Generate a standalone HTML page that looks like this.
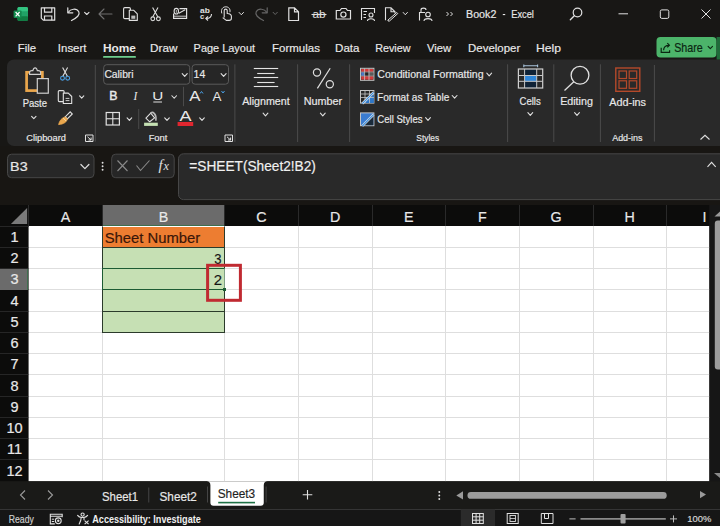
<!DOCTYPE html>
<html><head><meta charset="utf-8"><style>
html,body{margin:0;padding:0;background:#181715;overflow:hidden}
svg{display:block;font-family:"Liberation Sans",sans-serif}
text{paint-order:stroke}
</style></head><body>
<svg width="720" height="526" viewBox="0 0 720 526">
<rect x="0" y="0" width="720" height="526" rx="0" fill="#181715"/>
<rect x="7" y="59.5" width="730" height="86.5" rx="7" fill="#292929"/>
<rect x="17.5" y="7" width="10.5" height="13.8" rx="1.5" fill="#21a366"/>
<rect x="17.5" y="7" width="10.5" height="4.6" rx="1.5" fill="#33c481"/>
<rect x="17.5" y="11.6" width="10.5" height="4.6" rx="0" fill="#21a366"/>
<rect x="17.5" y="16.2" width="10.5" height="4.6" rx="1" fill="#107c41"/>
<rect x="13.6" y="10.4" width="8" height="7.6" rx="1" fill="#148a4e"/>
<path d="M15.6 12 L19.6 16.4 M19.6 12 L15.6 16.4" stroke="#ffffff" fill="none" stroke-width="1.2"/>
<path d="M41.3 7.8 H54.7 V20.2 H43.3 L41.3 18.2 Z" stroke="#e0e0e0" fill="none" stroke-width="1.2" stroke-linejoin="round"/>
<path d="M44.5 7.8 V12.2 H51.8 V7.8 M44.5 20.2 V16 H51.8 V20.2" stroke="#e0e0e0" fill="none" stroke-width="1.2"/>
<path d="M67.8 7.8 V12.8 H72.8" stroke="#e0e0e0" fill="none" stroke-width="1.2" stroke-linecap="round" stroke-linejoin="round"/>
<path d="M68.3 12.3 C70.5 8.8 76.5 7.8 78.8 11.8 C80.3 14.8 77 17.8 71.5 20.5" stroke="#e0e0e0" fill="none" stroke-width="1.2" stroke-linecap="round"/>
<path d="M84.6 12.3 L86.8 14.5 L89.0 12.3" stroke="#e0e0e0" fill="none" stroke-width="1.1" stroke-linecap="round" stroke-linejoin="round"/>
<path d="M99 14 H112 M99 14 L104 9 M99 14 L104 19" stroke="#6f6f6f" fill="none" stroke-width="1.1" stroke-linecap="round"/>
<rect x="123.6" y="7.6" width="6.8" height="11" rx="1.2" fill="#181715" stroke="#e0e0e0" stroke-width="1.1"/>
<path d="M129.3 10.3 H133.8 L137.3 13.8 V20.4 H129.3 Z" stroke="#e0e0e0" fill="#181715" stroke-width="1.1" stroke-linejoin="round"/>
<rect x="131.3" y="15.6" width="4" height="3.2" rx="0" fill="#bdbdbd"/>
<path d="M152.6 7.6 L157.8 16.8 M158 7.6 L152.8 16.8" stroke="#e0e0e0" fill="none" stroke-width="1.1"/>
<circle cx="152.8" cy="18.8" r="1.9" fill="none" stroke="#e0e0e0" stroke-width="1.1"/>
<circle cx="158.4" cy="18.8" r="1.9" fill="none" stroke="#e0e0e0" stroke-width="1.1"/>
<path d="M173.6 13.5 V18.3 H186.6 V8.6 H179.5" stroke="#e0e0e0" fill="none" stroke-width="1.2"/>
<path d="M173.6 16.2 H186.6" stroke="#e0e0e0" fill="none" stroke-width="0.9"/>
<path d="M178.8 13.2 L185.2 9.8" stroke="#e0e0e0" fill="none" stroke-width="1.1"/>
<ellipse cx="176.3" cy="11.2" rx="2.2" ry="2.8" fill="none" stroke="#e0e0e0" stroke-width="1.1"/>
<path d="M176.3 10 V12.8" stroke="#e0e0e0" fill="none" stroke-width="0.8"/>
<text x="200" y="13.3" font-size="7.6" font-weight="bold" fill="#e0e0e0" textLength="9.8" lengthAdjust="spacingAndGlyphs">ab</text>
<text x="200" y="18.8" font-size="7.6" font-weight="bold" fill="#e0e0e0">c</text>
<path d="M211.5 14 C211.5 17 209.5 18.5 206 18.5 M208 16.3 L205.8 18.5 L208 20.5" stroke="#e0e0e0" fill="none" stroke-width="1.1"/>
<path d="M221.8 13.4 C220.6 9.2 222.9 6.8 225.8 6.8 C228.7 6.8 230.6 9 229.9 12.2" stroke="#e0e0e0" fill="none" stroke-width="1"/>
<path d="M224.2 17.4 V10.4 C224.2 8.7 227.2 8.7 227.2 10.4 V13.5 C229.6 13.5 231.4 14.5 231.4 16.6 V18.3 C231.4 19.6 230.4 20.4 229.1 20.4 H226.3 L222.7 17.6" stroke="#e0e0e0" fill="none" stroke-width="1.1" stroke-linejoin="round"/>
<path d="M239.10000000000002 12.45 L241.3 14.75 L243.5 12.45" stroke="#e0e0e0" fill="none" stroke-width="1" stroke-linecap="round" stroke-linejoin="round"/>
<path d="M267.2 7.8 V12.8 H262.2" stroke="#666666" fill="none" stroke-width="1.2" stroke-linecap="round" stroke-linejoin="round"/>
<path d="M266.7 12.3 C264.5 8.8 258.5 7.8 256.2 11.8 C254.7 14.8 258 17.8 263.5 20.5" stroke="#666666" fill="none" stroke-width="1.2" stroke-linecap="round"/>
<path d="M273.09999999999997 12.3 L275.2 14.5 L277.3 12.3" stroke="#666666" fill="none" stroke-width="1" stroke-linecap="round" stroke-linejoin="round"/>
<path d="M288.8 7.8 H294.5 L298.5 11.8 V20.5 H288.8 Z M294.5 7.8 V11.8 H298.5" stroke="#e0e0e0" fill="none" stroke-width="1.2"/>
<text x="312.5" y="17.5" font-size="10" fill="#e0e0e0" textLength="13" lengthAdjust="spacingAndGlyphs">ab</text>
<line x1="311.5" y1="14.5" x2="326.5" y2="14.5" stroke="#e0e0e0" stroke-width="1.1"/>
<path d="M336.3 10.5 H340 L341.5 8.5 H346 L347.5 10.5 H350.5 V19 H336.3 Z" stroke="#e0e0e0" fill="none" stroke-width="1.2"/>
<circle cx="343.4" cy="14.6" r="2.6" fill="none" stroke="#e0e0e0" stroke-width="1.2"/>
<path d="M361.5 20 V8.5 H374.5 V13" stroke="#e0e0e0" fill="none" stroke-width="1.1"/>
<path d="M363.5 11.5 H367 M363.5 14.5 H366 M363.5 17.5 H366" stroke="#e0e0e0" fill="none" stroke-width="1"/>
<circle cx="371" cy="15" r="2" fill="none" stroke="#e0e0e0" stroke-width="1.1"/>
<path d="M367.5 21 C367.5 18 374.5 18 374.5 21" stroke="#e0e0e0" fill="none" stroke-width="1.1"/>
<path d="M385.5 20.3 V7.8 H391 L395 11.8 V13.5 M391 7.8 V11.8 H395" stroke="#e0e0e0" fill="none" stroke-width="1.1"/>
<path d="M388 20 L396.8 12.5 L397.8 13.5 L389.5 21 H388 Z" stroke="#e0e0e0" fill="none" stroke-width="1"/>
<path d="M403.2 12.45 L405.3 14.75 L407.40000000000003 12.45" stroke="#e0e0e0" fill="none" stroke-width="1" stroke-linecap="round" stroke-linejoin="round"/>
<path d="M419.5 20.5 V12.5 H425 M421 12.5 V10 C421 7.5 426 7.5 426 10" stroke="#e0e0e0" fill="none" stroke-width="1.1"/>
<circle cx="428" cy="14.5" r="2.3" fill="none" stroke="#e0e0e0" stroke-width="1.1"/>
<path d="M424 21 C424 17.8 432 17.8 432 21" stroke="#e0e0e0" fill="none" stroke-width="1.1"/>
<path d="M446.5 12 L448.5 14 L446.5 16 M450.5 12 L452.5 14 L450.5 16" stroke="#e0e0e0" fill="none" stroke-width="1"/>
<text x="466.05" y="18.20" font-size="11.74" fill="#e8e8e8" stroke="#e8e8e8" stroke-width="0.18" textLength="30.29" lengthAdjust="spacingAndGlyphs">Book2</text>
<rect x="502.8" y="14" width="2.4" height="1.1" rx="0" fill="#e8e8e8"/>
<text x="511.26" y="18.20" font-size="11.74" fill="#e8e8e8" stroke="#e8e8e8" stroke-width="0.18" textLength="22.65" lengthAdjust="spacingAndGlyphs">Excel</text>
<circle cx="577.5" cy="12.5" r="4.3" fill="none" stroke="#e0e0e0" stroke-width="1.2"/>
<path d="M574.3 15.7 L570.3 19.7" stroke="#e0e0e0" fill="none" stroke-width="1.3" stroke-linecap="round"/>
<line x1="618.5" y1="13.8" x2="628" y2="13.8" stroke="#e0e0e0" stroke-width="1"/>
<rect x="660.3" y="9.9" width="8.5" height="8.5" rx="1.5" fill="none" stroke="#e0e0e0" stroke-width="1"/>
<path d="M701.5 9.5 L710.5 18.5 M710.5 9.5 L701.5 18.5" stroke="#e0e0e0" fill="none" stroke-width="1"/>
<text x="17.79" y="52.40" font-size="11.74" fill="#e8e8e8" stroke="#e8e8e8" stroke-width="0.18" textLength="18.34" lengthAdjust="spacingAndGlyphs">File</text>
<text x="57.87" y="52.40" font-size="11.74" fill="#e8e8e8" stroke="#e8e8e8" stroke-width="0.18" textLength="28.60" lengthAdjust="spacingAndGlyphs">Insert</text>
<text x="102.98" y="52.40" font-size="11.74" font-weight="bold" fill="#e8e8e8" textLength="32.98" lengthAdjust="spacingAndGlyphs">Home</text>
<text x="150.06" y="52.40" font-size="11.74" fill="#e8e8e8" stroke="#e8e8e8" stroke-width="0.18" textLength="27.42" lengthAdjust="spacingAndGlyphs">Draw</text>
<text x="193.62" y="52.40" font-size="11.74" fill="#e8e8e8" stroke="#e8e8e8" stroke-width="0.18" textLength="61.44" lengthAdjust="spacingAndGlyphs">Page Layout</text>
<text x="272.08" y="52.40" font-size="11.74" fill="#e8e8e8" stroke="#e8e8e8" stroke-width="0.18" textLength="47.79" lengthAdjust="spacingAndGlyphs">Formulas</text>
<text x="335.07" y="52.40" font-size="11.74" fill="#e8e8e8" stroke="#e8e8e8" stroke-width="0.18" textLength="24.45" lengthAdjust="spacingAndGlyphs">Data</text>
<text x="375.14" y="52.40" font-size="11.74" fill="#e8e8e8" stroke="#e8e8e8" stroke-width="0.18" textLength="35.35" lengthAdjust="spacingAndGlyphs">Review</text>
<text x="426.94" y="52.40" font-size="11.74" fill="#e8e8e8" stroke="#e8e8e8" stroke-width="0.18" textLength="24.05" lengthAdjust="spacingAndGlyphs">View</text>
<text x="468.09" y="52.40" font-size="11.74" fill="#e8e8e8" stroke="#e8e8e8" stroke-width="0.18" textLength="52.12" lengthAdjust="spacingAndGlyphs">Developer</text>
<text x="536.03" y="52.40" font-size="11.74" fill="#e8e8e8" stroke="#e8e8e8" stroke-width="0.18" textLength="24.98" lengthAdjust="spacingAndGlyphs">Help</text>
<rect x="103" y="56" width="33" height="1.8" rx="0.9" fill="#6fcf8f"/>
<rect x="656.5" y="37" width="60" height="20.6" rx="4" fill="#4cb46a"/>
<rect x="716.6" y="37" width="3.4" height="22.5" rx="0" fill="#1f6b3a"/>
<path d="M661.2 47.8 V52.3 H669.6 V50.3" stroke="#0b2612" fill="none" stroke-width="1.2"/>
<path d="M663.6 50.3 C663.6 46.8 665.5 45.3 669.3 45.3 M667.3 43.2 L669.4 45.3 L667.3 47.4" stroke="#0b2612" fill="none" stroke-width="1.2"/>
<text x="674.22" y="51.60" font-size="12.03" fill="#0b2612" stroke="#0b2612" stroke-width="0.18" textLength="28.60" lengthAdjust="spacingAndGlyphs">Share</text>
<path d="M708.0999999999999 46.3 L710.3 48.7 L712.5 46.3" stroke="#0b2612" fill="none" stroke-width="1.1" stroke-linecap="round" stroke-linejoin="round"/>
<line x1="95.3" y1="65" x2="95.3" y2="141.6" stroke="#4b4b4b" stroke-width="1"/>
<line x1="234.9" y1="64.3" x2="234.9" y2="142" stroke="#4b4b4b" stroke-width="1"/>
<line x1="297.6" y1="64.3" x2="297.6" y2="142" stroke="#4b4b4b" stroke-width="1"/>
<line x1="349.6" y1="64.3" x2="349.6" y2="142" stroke="#4b4b4b" stroke-width="1"/>
<line x1="507.6" y1="64.3" x2="507.6" y2="142" stroke="#4b4b4b" stroke-width="1"/>
<line x1="553.8" y1="64.3" x2="553.8" y2="142" stroke="#4b4b4b" stroke-width="1"/>
<line x1="600.4" y1="64.3" x2="600.4" y2="142" stroke="#4b4b4b" stroke-width="1"/>
<line x1="654.4" y1="65" x2="654.4" y2="141.6" stroke="#4b4b4b" stroke-width="1"/>
<rect x="26.6" y="72.3" width="15.8" height="18.3" rx="0" fill="none" stroke="#eaa64c" stroke-width="2.7"/>
<path d="M29.6 74.4 H40.6 V72.6 C40.6 71.2 39.6 70.6 38.2 70.6 H37.3 C36.9 68.9 35.9 67.9 35.1 67.9 C34.3 67.9 33.3 68.9 32.9 70.6 H32 C30.6 70.6 29.6 71.2 29.6 72.6 Z" stroke="#cfcfcf" fill="#292929" stroke-width="1.1"/>
<rect x="37.3" y="78.6" width="11" height="14.6" rx="0" fill="#292929" stroke="#cfcfcf" stroke-width="1.2"/>
<text x="22.74" y="107.30" font-size="10.72" fill="#e8e8e8" stroke="#e8e8e8" stroke-width="0.18" textLength="24.31" lengthAdjust="spacingAndGlyphs">Paste</text>
<path d="M31.599999999999998 116.3 L33.8 118.7 L36.0 116.3" stroke="#e0e0e0" fill="none" stroke-width="1.1" stroke-linecap="round" stroke-linejoin="round"/>
<path d="M62.6 67.6 L67.4 76.2 M67.6 67.6 L62.8 76.2" stroke="#e0e0e0" fill="none" stroke-width="1.1"/>
<circle cx="62.5" cy="78.2" r="1.9" fill="none" stroke="#4aa0e6" stroke-width="1.1"/>
<circle cx="67.7" cy="78.2" r="1.9" fill="none" stroke="#4aa0e6" stroke-width="1.1"/>
<rect x="58.3" y="90.6" width="5.8" height="11" rx="1" fill="#292929" stroke="#e0e0e0" stroke-width="1.1"/>
<path d="M63.3 93.1 H68.3 L71.7 96.5 V103.5 H63.3 Z" stroke="#e0e0e0" fill="#292929" stroke-width="1.1" stroke-linejoin="round"/>
<path d="M65.6 98.4 H69.4 M65.6 100.6 H69.4" stroke="#e0e0e0" fill="none" stroke-width="0.9"/>
<path d="M79.60000000000001 95.85 L81.7 98.15 L83.8 95.85" stroke="#e0e0e0" fill="none" stroke-width="1.1" stroke-linecap="round" stroke-linejoin="round"/>
<path d="M70.2 111.9 L72.3 114 L67.3 119 L65.2 116.9 Z" stroke="#e0e0e0" fill="none" stroke-width="1.1"/>
<path d="M65.2 116.9 L67.3 119 C66.6 122 64.2 124 58.6 124.6 C59.4 120.8 61.8 117.7 65.2 116.9 Z" stroke="#eaa64c" fill="#eaa64c" stroke-width="0.8"/>
<path d="M63.2 118 L66.2 121" stroke="#f3dcb0" fill="none" stroke-width="1"/>
<text x="26.24" y="140.70" font-size="9.57" fill="#e8e8e8" stroke="#e8e8e8" stroke-width="0.18" textLength="39.67" lengthAdjust="spacingAndGlyphs">Clipboard</text>
<path d="M85.5 141.5 V135 H93.0 V141.5 Z" stroke="#e0e0e0" fill="none" stroke-width="1"/>
<path d="M87.5 136.8 L91.1 140 M91.1 137.5 V140 H88.5" stroke="#e0e0e0" fill="none" stroke-width="1"/>
<rect x="103.7" y="64.7" width="86" height="19.5" rx="3" fill="#262626" stroke="#5a5a5a" stroke-width="1"/>
<rect x="192.1" y="64.7" width="36.4" height="19.5" rx="3" fill="#262626" stroke="#5a5a5a" stroke-width="1"/>
<text x="104.38" y="78.40" font-size="10.43" fill="#e8e8e8" stroke="#e8e8e8" stroke-width="0.18" textLength="29.23" lengthAdjust="spacingAndGlyphs">Calibri</text>
<path d="M182.2 73.6 L184.7 76.4 L187.2 73.6" stroke="#e0e0e0" fill="none" stroke-width="1.1" stroke-linecap="round" stroke-linejoin="round"/>
<text x="193.62" y="78.40" font-size="10.43" fill="#e8e8e8" stroke="#e8e8e8" stroke-width="0.18" textLength="11.62" lengthAdjust="spacingAndGlyphs">14</text>
<path d="M221.1 73.6 L223.6 76.4 L226.1 73.6" stroke="#e0e0e0" fill="none" stroke-width="1.1" stroke-linecap="round" stroke-linejoin="round"/>
<text x="109.21" y="100.40" font-size="12.03" fill="#e8e8e8" stroke="#e8e8e8" stroke-width="0.45" textLength="8.23" lengthAdjust="spacingAndGlyphs">B</text>
<text x="133.5" y="100.4" font-size="11.5" font-style="italic" font-family="Liberation Serif" fill="#e8e8e8">I</text>
<text x="152.16" y="99.50" font-size="10.87" fill="#e8e8e8" textLength="11.02" lengthAdjust="spacingAndGlyphs">U</text>
<line x1="153.3" y1="102" x2="162" y2="102" stroke="#e0e0e0" stroke-width="1"/>
<path d="M171.89999999999998 95.75 L174.2 98.25 L176.5 95.75" stroke="#e0e0e0" fill="none" stroke-width="1.1" stroke-linecap="round" stroke-linejoin="round"/>
<line x1="183.5" y1="86.8" x2="183.5" y2="106.2" stroke="#4b4b4b" stroke-width="1"/>
<text x="189.30" y="101.00" font-size="15.22" fill="#e8e8e8" textLength="11.23" lengthAdjust="spacingAndGlyphs">A</text>
<path d="M200 93.5 L201.5 91.5 L203 93.5" stroke="#4aa0e6" fill="none" stroke-width="1"/>
<text x="212.60" y="101.00" font-size="12.32" fill="#e8e8e8" textLength="8.93" lengthAdjust="spacingAndGlyphs">A</text>
<path d="M221.5 91 L223 93 L224.5 91" stroke="#4aa0e6" fill="none" stroke-width="1"/>
<rect x="106.2" y="112.5" width="13.2" height="12.5" rx="0" fill="none" stroke="#e0e0e0" stroke-width="1.2"/>
<line x1="112.8" y1="112.5" x2="112.8" y2="125" stroke="#e0e0e0" stroke-width="1.1"/>
<line x1="106.2" y1="118.75" x2="119.4" y2="118.75" stroke="#e0e0e0" stroke-width="1.1"/>
<path d="M127.10000000000001 117.95 L129.4 120.45 L131.70000000000002 117.95" stroke="#e0e0e0" fill="none" stroke-width="1.1" stroke-linecap="round" stroke-linejoin="round"/>
<line x1="138.7" y1="109" x2="138.7" y2="129" stroke="#4b4b4b" stroke-width="1"/>
<path d="M145.9 118.1 L150.7 113.2 L154.6 117.9 L149.7 121.8 Z" stroke="#e0e0e0" fill="none" stroke-width="1.1" stroke-linejoin="round"/>
<path d="M150.9 112.9 C152.8 111.6 156.6 113.6 155.9 120.2" stroke="#b8b8b8" fill="none" stroke-width="1.6" stroke-linecap="round"/>
<rect x="144.1" y="122.7" width="13.7" height="3.2" rx="0" fill="#c5e0b3"/>
<path d="M164.7 117.95 L167 120.45 L169.3 117.95" stroke="#e0e0e0" fill="none" stroke-width="1.1" stroke-linecap="round" stroke-linejoin="round"/>
<text x="179.50" y="120.50" font-size="13.77" fill="#e8e8e8" textLength="12.04" lengthAdjust="spacingAndGlyphs">A</text>
<rect x="177.6" y="122" width="15.6" height="4" rx="0" fill="#e0262f"/>
<path d="M199.7 117.95 L202 120.45 L204.3 117.95" stroke="#e0e0e0" fill="none" stroke-width="1.1" stroke-linecap="round" stroke-linejoin="round"/>
<text x="148.65" y="140.60" font-size="9.57" fill="#e8e8e8" stroke="#e8e8e8" stroke-width="0.18" textLength="18.70" lengthAdjust="spacingAndGlyphs">Font</text>
<path d="M225 141.5 V135 H232.5 V141.5 Z" stroke="#e0e0e0" fill="none" stroke-width="1"/>
<path d="M227 136.8 L230.6 140 M230.6 137.5 V140 H228" stroke="#e0e0e0" fill="none" stroke-width="1"/>
<line x1="253.8" y1="68.5" x2="278.2" y2="68.5" stroke="#e4e4e4" stroke-width="1.1"/>
<line x1="257.2" y1="73.5" x2="274.6" y2="73.5" stroke="#e4e4e4" stroke-width="1.1"/>
<line x1="253.8" y1="77.5" x2="278.2" y2="77.5" stroke="#e4e4e4" stroke-width="1.1"/>
<line x1="257.2" y1="82.5" x2="274.6" y2="82.5" stroke="#e4e4e4" stroke-width="1.1"/>
<line x1="253.8" y1="86.5" x2="278.2" y2="86.5" stroke="#e4e4e4" stroke-width="1.1"/>
<text x="242.20" y="105.00" font-size="11.01" fill="#e8e8e8" stroke="#e8e8e8" stroke-width="0.18" textLength="47.47" lengthAdjust="spacingAndGlyphs">Alignment</text>
<path d="M263.1 113.2 L265.5 115.8 L267.9 113.2" stroke="#e0e0e0" fill="none" stroke-width="1.1" stroke-linecap="round" stroke-linejoin="round"/>
<circle cx="317" cy="72.5" r="3.6" fill="none" stroke="#e0e0e0" stroke-width="1.2"/>
<circle cx="329.8" cy="84.2" r="3.6" fill="none" stroke="#e0e0e0" stroke-width="1.2"/>
<line x1="330.2" y1="68.3" x2="317.4" y2="88.4" stroke="#e0e0e0" stroke-width="1.2"/>
<text x="303.63" y="105.00" font-size="11.01" fill="#e8e8e8" stroke="#e8e8e8" stroke-width="0.18" textLength="38.55" lengthAdjust="spacingAndGlyphs">Number</text>
<path d="M320.40000000000003 113.2 L322.8 115.8 L325.2 113.2" stroke="#e0e0e0" fill="none" stroke-width="1.1" stroke-linecap="round" stroke-linejoin="round"/>
<rect x="360.5" y="68.3" width="13.4" height="12" rx="0" fill="#262626" stroke="#c4c4c4" stroke-width="1"/>
<rect x="361.2" y="69" width="12" height="2.8" rx="0" fill="#d23a3a"/>
<rect x="361.2" y="76.2" width="12" height="3.4" rx="0" fill="#d23a3a"/>
<rect x="361.2" y="72.2" width="3" height="3.6" rx="0" fill="#4a78c8"/>
<rect x="368.5" y="72.2" width="4.7" height="3.6" rx="0" fill="#5a5a5a"/>
<line x1="364.6" y1="68.3" x2="364.6" y2="80.3" stroke="#c4c4c4" stroke-width="0.8"/>
<line x1="369" y1="68.3" x2="369" y2="80.3" stroke="#c4c4c4" stroke-width="0.8"/>
<line x1="360.5" y1="72" x2="373.9" y2="72" stroke="#c4c4c4" stroke-width="0.6"/>
<line x1="360.5" y1="76" x2="373.9" y2="76" stroke="#c4c4c4" stroke-width="0.6"/>
<text x="377.27" y="78.40" font-size="10.87" fill="#e8e8e8" stroke="#e8e8e8" stroke-width="0.18" textLength="106.32" lengthAdjust="spacingAndGlyphs">Conditional Formatting</text>
<path d="M486.8 73.2 L489.2 75.8 L491.59999999999997 73.2" stroke="#e0e0e0" fill="none" stroke-width="1.1" stroke-linecap="round" stroke-linejoin="round"/>
<rect x="360.5" y="90.5" width="13.4" height="12.6" rx="0" fill="#262626" stroke="#c4c4c4" stroke-width="1"/>
<path d="M373.9 94 V103.1 H363.5 Z" stroke="none" fill="#2f78c8" stroke-width="1"/>
<line x1="360.5" y1="94" x2="373.9" y2="94" stroke="#c4c4c4" stroke-width="0.8"/>
<line x1="360.5" y1="97.5" x2="373.9" y2="97.5" stroke="#c4c4c4" stroke-width="0.8"/>
<line x1="365" y1="90.5" x2="365" y2="103.1" stroke="#c4c4c4" stroke-width="0.8"/>
<line x1="369.5" y1="90.5" x2="369.5" y2="103.1" stroke="#c4c4c4" stroke-width="0.8"/>
<path d="M362.3 103.6 L373.6 92.3" stroke="#e6e6e6" fill="none" stroke-width="2.4"/>
<path d="M362.3 103.6 L373.6 92.3" stroke="#3a8ee0" fill="none" stroke-width="1.1"/>
<text x="376.99" y="100.70" font-size="10.87" fill="#e8e8e8" stroke="#e8e8e8" stroke-width="0.18" textLength="72.38" lengthAdjust="spacingAndGlyphs">Format as Table</text>
<path d="M452.20000000000005 95.5 L454.6 98.1 L457.0 95.5" stroke="#e0e0e0" fill="none" stroke-width="1.1" stroke-linecap="round" stroke-linejoin="round"/>
<rect x="360.5" y="112.9" width="13.4" height="12.8" rx="0" fill="#3a7cd0" stroke="#c4c4c4" stroke-width="1"/>
<path d="M373.4 115.5 V125.2 H364 Z" stroke="none" fill="#1a2a3a" stroke-width="1"/>
<path d="M362.3 126 L373.6 114.7" stroke="#e6e6e6" fill="none" stroke-width="2.4"/>
<path d="M362.3 126 L373.6 114.7" stroke="#3a8ee0" fill="none" stroke-width="1.1"/>
<text x="377.32" y="122.90" font-size="10.87" fill="#e8e8e8" stroke="#e8e8e8" stroke-width="0.18" textLength="45.20" lengthAdjust="spacingAndGlyphs">Cell Styles</text>
<path d="M425.6 117.7 L428 120.3 L430.4 117.7" stroke="#e0e0e0" fill="none" stroke-width="1.1" stroke-linecap="round" stroke-linejoin="round"/>
<text x="416.32" y="141.30" font-size="9.86" fill="#e8e8e8" stroke="#e8e8e8" stroke-width="0.18" textLength="22.86" lengthAdjust="spacingAndGlyphs">Styles</text>
<path d="M523.8 65.8 H537.6 M523.8 64.4 V67.2 M537.6 64.4 V67.2" stroke="#a9c4dc" fill="none" stroke-width="1.1"/>
<rect x="524.6" y="69" width="12.1" height="19" rx="0" fill="#0f2236"/>
<rect x="524.6" y="75.5" width="12.1" height="5.8" rx="0" fill="#2f86d8"/>
<rect x="518.4" y="69" width="24.3" height="19" rx="0" fill="none" stroke="#d0d0d0" stroke-width="1.2"/>
<line x1="518.4" y1="75.5" x2="542.7" y2="75.5" stroke="#c8c8c8" stroke-width="1"/>
<line x1="518.4" y1="81.3" x2="542.7" y2="81.3" stroke="#c8c8c8" stroke-width="1"/>
<line x1="524.6" y1="69" x2="524.6" y2="88" stroke="#c8c8c8" stroke-width="1"/>
<line x1="536.7" y1="69" x2="536.7" y2="88" stroke="#c8c8c8" stroke-width="1"/>
<text x="519.52" y="105.10" font-size="10.87" fill="#e8e8e8" stroke="#e8e8e8" stroke-width="0.18" textLength="21.19" lengthAdjust="spacingAndGlyphs">Cells</text>
<path d="M527.9 112.7 L530.3 115.3 L532.6999999999999 112.7" stroke="#e0e0e0" fill="none" stroke-width="1.1" stroke-linecap="round" stroke-linejoin="round"/>
<circle cx="580" cy="75.3" r="8.9" fill="none" stroke="#e0e0e0" stroke-width="1.3"/>
<line x1="573.8" y1="81.8" x2="564.5" y2="90.5" stroke="#e0e0e0" stroke-width="1.3"/>
<text x="560.14" y="105.10" font-size="10.87" fill="#e8e8e8" stroke="#e8e8e8" stroke-width="0.18" textLength="32.78" lengthAdjust="spacingAndGlyphs">Editing</text>
<path d="M574.6 112.7 L577 115.3 L579.4 112.7" stroke="#e0e0e0" fill="none" stroke-width="1.1" stroke-linecap="round" stroke-linejoin="round"/>
<rect x="615.8" y="68" width="24" height="23.3" rx="0" fill="none" stroke="#b4492a" stroke-width="1.4"/>
<rect x="619" y="71" width="7.5" height="7.5" rx="0" fill="none" stroke="#b4492a" stroke-width="1.2"/>
<rect x="629.2" y="71" width="7.5" height="7.5" rx="0" fill="none" stroke="#b4492a" stroke-width="1.2"/>
<rect x="619" y="80.8" width="7.5" height="7.5" rx="0" fill="none" stroke="#b4492a" stroke-width="1.2"/>
<rect x="629.2" y="80.8" width="7.5" height="7.5" rx="0" fill="none" stroke="#b4492a" stroke-width="1.2"/>
<text x="609.30" y="106.40" font-size="11.01" fill="#e8e8e8" stroke="#e8e8e8" stroke-width="0.18" textLength="36.69" lengthAdjust="spacingAndGlyphs">Add-ins</text>
<text x="612.20" y="141.30" font-size="9.86" fill="#e8e8e8" stroke="#e8e8e8" stroke-width="0.18" textLength="30.32" lengthAdjust="spacingAndGlyphs">Add-ins</text>
<path d="M700.5 139.5 L705 135.3 L709.5 139.5" stroke="#e0e0e0" fill="none" stroke-width="1.1"/>
<rect x="0" y="146" width="720" height="59.5" rx="0" fill="#181613"/>
<rect x="7.5" y="154.2" width="86.5" height="23.5" rx="4" fill="#272727" stroke="#474747" stroke-width="1"/>
<text x="10.10" y="170.50" font-size="12.32" fill="#e8e8e8" stroke="#e8e8e8" stroke-width="0.18" textLength="17.51" lengthAdjust="spacingAndGlyphs">B3</text>
<path d="M80.9 164.5 L84.9 168.7 L88.9 164.5" stroke="#e0e0e0" fill="none" stroke-width="1.2" stroke-linecap="round" stroke-linejoin="round"/>
<circle cx="102.6" cy="162.8" r="0.95" fill="#e0e0e0"/>
<circle cx="102.6" cy="166.3" r="0.95" fill="#e0e0e0"/>
<circle cx="102.6" cy="169.8" r="0.95" fill="#e0e0e0"/>
<rect x="111.7" y="154.2" width="62.5" height="23.5" rx="4" fill="#262626" stroke="#474747" stroke-width="1"/>
<path d="M117.5 160.5 L127.5 171 M127.5 160.5 L117.5 171" stroke="#8a8a8a" fill="none" stroke-width="1.1"/>
<path d="M136.5 165.5 L140.5 170.5 L149.5 160.5" stroke="#8a8a8a" fill="none" stroke-width="1.1"/>
<text x="158.6" y="170.4" font-size="15" font-style="italic" font-family="Liberation Serif" fill="#e0e0e0">f</text>
<text x="163.4" y="170.4" font-size="12.2" font-style="italic" font-family="Liberation Serif" fill="#e0e0e0">x</text>
<rect x="178.5" y="153.8" width="560" height="45.8" rx="5" fill="#292929" stroke="#474747" stroke-width="1"/>
<text x="189.32" y="171.10" font-size="14.49" fill="#f0f0f0" stroke="#f0f0f0" stroke-width="0.18" textLength="126.57" lengthAdjust="spacingAndGlyphs">=SHEET(Sheet2!B2)</text>
<path d="M707.5 166.8 L711.6 162.3 L715.7 166.8" stroke="#e0e0e0" fill="none" stroke-width="1.1"/>
<rect x="0" y="205" width="709.4" height="21" rx="0" fill="#0c0c0b"/>
<rect x="0" y="226" width="28.6" height="255.3" rx="0" fill="#0c0c0b"/>
<rect x="28.6" y="226" width="680.8" height="255.3" rx="0" fill="#ffffff"/>
<line x1="28.6" y1="247.5" x2="709.4" y2="247.5" stroke="#dedede" stroke-width="1"/>
<line x1="28.6" y1="268.5" x2="709.4" y2="268.5" stroke="#dedede" stroke-width="1"/>
<line x1="28.6" y1="289.5" x2="709.4" y2="289.5" stroke="#dedede" stroke-width="1"/>
<line x1="28.6" y1="311.5" x2="709.4" y2="311.5" stroke="#dedede" stroke-width="1"/>
<line x1="28.6" y1="332.5" x2="709.4" y2="332.5" stroke="#dedede" stroke-width="1"/>
<line x1="28.6" y1="353.5" x2="709.4" y2="353.5" stroke="#dedede" stroke-width="1"/>
<line x1="28.6" y1="374.5" x2="709.4" y2="374.5" stroke="#dedede" stroke-width="1"/>
<line x1="28.6" y1="396.5" x2="709.4" y2="396.5" stroke="#dedede" stroke-width="1"/>
<line x1="28.6" y1="417.5" x2="709.4" y2="417.5" stroke="#dedede" stroke-width="1"/>
<line x1="28.6" y1="438.5" x2="709.4" y2="438.5" stroke="#dedede" stroke-width="1"/>
<line x1="28.6" y1="459.5" x2="709.4" y2="459.5" stroke="#dedede" stroke-width="1"/>
<line x1="102.5" y1="226" x2="102.5" y2="481.3" stroke="#dedede" stroke-width="1"/>
<line x1="224.5" y1="226" x2="224.5" y2="481.3" stroke="#dedede" stroke-width="1"/>
<line x1="298.5" y1="226" x2="298.5" y2="481.3" stroke="#dedede" stroke-width="1"/>
<line x1="372.5" y1="226" x2="372.5" y2="481.3" stroke="#dedede" stroke-width="1"/>
<line x1="445.5" y1="226" x2="445.5" y2="481.3" stroke="#dedede" stroke-width="1"/>
<line x1="519.5" y1="226" x2="519.5" y2="481.3" stroke="#dedede" stroke-width="1"/>
<line x1="593.5" y1="226" x2="593.5" y2="481.3" stroke="#dedede" stroke-width="1"/>
<line x1="666.5" y1="226" x2="666.5" y2="481.3" stroke="#dedede" stroke-width="1"/>
<line x1="28.5" y1="205" x2="28.5" y2="226" stroke="#2a2a2a" stroke-width="1"/>
<line x1="102.5" y1="205" x2="102.5" y2="226" stroke="#2a2a2a" stroke-width="1"/>
<line x1="224.5" y1="205" x2="224.5" y2="226" stroke="#2a2a2a" stroke-width="1"/>
<line x1="298.5" y1="205" x2="298.5" y2="226" stroke="#2a2a2a" stroke-width="1"/>
<line x1="372.5" y1="205" x2="372.5" y2="226" stroke="#2a2a2a" stroke-width="1"/>
<line x1="445.5" y1="205" x2="445.5" y2="226" stroke="#2a2a2a" stroke-width="1"/>
<line x1="519.5" y1="205" x2="519.5" y2="226" stroke="#2a2a2a" stroke-width="1"/>
<line x1="593.5" y1="205" x2="593.5" y2="226" stroke="#2a2a2a" stroke-width="1"/>
<line x1="666.5" y1="205" x2="666.5" y2="226" stroke="#2a2a2a" stroke-width="1"/>
<line x1="0" y1="226.5" x2="28.6" y2="226.5" stroke="#262626" stroke-width="1"/>
<line x1="0" y1="247.5" x2="28.6" y2="247.5" stroke="#262626" stroke-width="1"/>
<line x1="0" y1="268.5" x2="28.6" y2="268.5" stroke="#262626" stroke-width="1"/>
<line x1="0" y1="289.5" x2="28.6" y2="289.5" stroke="#262626" stroke-width="1"/>
<line x1="0" y1="311.5" x2="28.6" y2="311.5" stroke="#262626" stroke-width="1"/>
<line x1="0" y1="332.5" x2="28.6" y2="332.5" stroke="#262626" stroke-width="1"/>
<line x1="0" y1="353.5" x2="28.6" y2="353.5" stroke="#262626" stroke-width="1"/>
<line x1="0" y1="374.5" x2="28.6" y2="374.5" stroke="#262626" stroke-width="1"/>
<line x1="0" y1="396.5" x2="28.6" y2="396.5" stroke="#262626" stroke-width="1"/>
<line x1="0" y1="417.5" x2="28.6" y2="417.5" stroke="#262626" stroke-width="1"/>
<line x1="0" y1="438.5" x2="28.6" y2="438.5" stroke="#262626" stroke-width="1"/>
<line x1="0" y1="459.5" x2="28.6" y2="459.5" stroke="#262626" stroke-width="1"/>
<path d="M10.9 224 L27.1 224 L27.1 208 Z" stroke="none" fill="#7a7a7a" stroke-width="1"/>
<rect x="103" y="205" width="121" height="21" rx="0" fill="#6b6b6b"/>
<line x1="103" y1="225.5" x2="224" y2="225.5" stroke="#3f6e4e" stroke-width="1"/>
<rect x="0" y="269" width="28" height="21" rx="0" fill="#6b6b6b"/>
<line x1="27.5" y1="269" x2="27.5" y2="290" stroke="#3f6e4e" stroke-width="1"/>
<text x="65.45" y="221.6" font-size="14.3" fill="#e8e8e8" stroke="#e8e8e8" stroke-width="0.15" text-anchor="middle">A</text>
<text x="163.48" y="221.6" font-size="14.3" fill="#e8e8e8" stroke="#e8e8e8" stroke-width="0.15" text-anchor="middle">B</text>
<text x="261.48" y="221.6" font-size="14.3" fill="#e8e8e8" stroke="#e8e8e8" stroke-width="0.15" text-anchor="middle">C</text>
<text x="335.12" y="221.6" font-size="14.3" fill="#e8e8e8" stroke="#e8e8e8" stroke-width="0.15" text-anchor="middle">D</text>
<text x="408.76" y="221.6" font-size="14.3" fill="#e8e8e8" stroke="#e8e8e8" stroke-width="0.15" text-anchor="middle">E</text>
<text x="482.40" y="221.6" font-size="14.3" fill="#e8e8e8" stroke="#e8e8e8" stroke-width="0.15" text-anchor="middle">F</text>
<text x="556.04" y="221.6" font-size="14.3" fill="#e8e8e8" stroke="#e8e8e8" stroke-width="0.15" text-anchor="middle">G</text>
<text x="629.68" y="221.6" font-size="14.3" fill="#e8e8e8" stroke="#e8e8e8" stroke-width="0.15" text-anchor="middle">H</text>
<text x="704.40" y="221.6" font-size="14.3" fill="#e8e8e8" stroke="#e8e8e8" stroke-width="0.15" text-anchor="middle">I</text>
<text x="14.5" y="242.10" font-size="14.5" fill="#e8e8e8" stroke="#e8e8e8" stroke-width="0.2" text-anchor="middle">1</text>
<text x="14.5" y="263.10" font-size="14.5" fill="#e8e8e8" stroke="#e8e8e8" stroke-width="0.2" text-anchor="middle">2</text>
<text x="14.5" y="284.10" font-size="14.5" fill="#e8e8e8" stroke="#e8e8e8" stroke-width="0.2" text-anchor="middle">3</text>
<text x="14.5" y="305.60" font-size="14.5" fill="#e8e8e8" stroke="#e8e8e8" stroke-width="0.2" text-anchor="middle">4</text>
<text x="14.5" y="327.10" font-size="14.5" fill="#e8e8e8" stroke="#e8e8e8" stroke-width="0.2" text-anchor="middle">5</text>
<text x="14.5" y="348.10" font-size="14.5" fill="#e8e8e8" stroke="#e8e8e8" stroke-width="0.2" text-anchor="middle">6</text>
<text x="14.5" y="369.10" font-size="14.5" fill="#e8e8e8" stroke="#e8e8e8" stroke-width="0.2" text-anchor="middle">7</text>
<text x="14.5" y="390.60" font-size="14.5" fill="#e8e8e8" stroke="#e8e8e8" stroke-width="0.2" text-anchor="middle">8</text>
<text x="14.5" y="412.10" font-size="14.5" fill="#e8e8e8" stroke="#e8e8e8" stroke-width="0.2" text-anchor="middle">9</text>
<text x="14.5" y="433.10" font-size="14.5" fill="#e8e8e8" stroke="#e8e8e8" stroke-width="0.2" text-anchor="middle">10</text>
<text x="14.5" y="454.10" font-size="14.5" fill="#e8e8e8" stroke="#e8e8e8" stroke-width="0.2" text-anchor="middle">11</text>
<text x="14.5" y="475.60" font-size="14.5" fill="#e8e8e8" stroke="#e8e8e8" stroke-width="0.2" text-anchor="middle">12</text>
<rect x="102" y="227" width="122" height="21" rx="0" fill="#ed7d31"/>
<rect x="102" y="248" width="122" height="85" rx="0" fill="#c6e0b4"/>
<line x1="102" y1="247.5" x2="225" y2="247.5" stroke="#2b3b2b" stroke-width="1"/>
<line x1="102" y1="311.5" x2="225" y2="311.5" stroke="#2b3b2b" stroke-width="1"/>
<line x1="102" y1="332.5" x2="225" y2="332.5" stroke="#2b3b2b" stroke-width="1"/>
<line x1="102.5" y1="226.5" x2="102.5" y2="332.5" stroke="#2b3b2b" stroke-width="1"/>
<line x1="224.5" y1="226.5" x2="224.5" y2="332.5" stroke="#2b3b2b" stroke-width="1"/>
<line x1="102" y1="268.5" x2="225" y2="268.5" stroke="#1d5c34" stroke-width="1"/>
<line x1="102" y1="289.5" x2="225" y2="289.5" stroke="#1d5c34" stroke-width="1"/>
<line x1="102.5" y1="268.5" x2="102.5" y2="289.5" stroke="#1d5c34" stroke-width="1"/>
<line x1="224.5" y1="268.5" x2="224.5" y2="289.5" stroke="#7f9f86" stroke-width="1"/>
<rect x="223" y="288" width="3" height="3" rx="0" fill="#1d5c34"/>
<text x="104.63" y="242.50" font-size="15.22" fill="#3a1608" stroke="#3a1608" stroke-width="0.2" textLength="95.63" lengthAdjust="spacingAndGlyphs">Sheet Number</text>
<text x="214.28" y="264.20" font-size="14.93" fill="#141414" stroke="#141414" stroke-width="0.15" textLength="7.26" lengthAdjust="spacingAndGlyphs">3</text>
<text x="213.85" y="285.00" font-size="14.64" fill="#141414" stroke="#141414" stroke-width="0.15" textLength="8.31" lengthAdjust="spacingAndGlyphs">2</text>
<rect x="207.6" y="265.3" width="32.8" height="35" rx="0" fill="none" stroke="#c02a31" stroke-width="3"/>
<rect x="709.4" y="205" width="10.600000000000023" height="276.3" rx="0" fill="#161616"/>
<path d="M714.5 216.5 L720 211.5 L720 216.5 Z" stroke="none" fill="#9a9a9a" stroke-width="1"/>
<rect x="714.8" y="220.6" width="8" height="148.8" rx="3" fill="#9c9c9c"/>
<path d="M714 473 L720 478 L720 473 Z" stroke="none" fill="#8a8a8a" stroke-width="1"/>
<rect x="0" y="481.3" width="720" height="27.69999999999999" rx="0" fill="#1a1a18"/>
<path d="M25 490.5 L20.5 495 L25 499.5" stroke="#9a9a9a" fill="none" stroke-width="1.1"/>
<path d="M48 490.5 L52.5 495 L48 499.5" stroke="#9a9a9a" fill="none" stroke-width="1.1"/>
<text x="101.99" y="501.20" font-size="13.04" fill="#e8e8e8" stroke="#e8e8e8" stroke-width="0.18" textLength="36.02" lengthAdjust="spacingAndGlyphs">Sheet1</text>
<line x1="148.75" y1="487.5" x2="148.75" y2="502.5" stroke="#444" stroke-width="1"/>
<text x="159.47" y="501.20" font-size="13.04" fill="#e8e8e8" stroke="#e8e8e8" stroke-width="0.18" textLength="37.36" lengthAdjust="spacingAndGlyphs">Sheet2</text>
<line x1="207.5" y1="486.5" x2="207.5" y2="502.5" stroke="#444" stroke-width="1"/>
<path d="M206.4 481.3 Q210.4 481.3 210.4 485.3 V502.7 Q210.4 505.7 213.4 505.7 H260.75 Q263.75 505.7 263.75 502.7 V485.3 Q263.75 481.3 267.75 481.3 Z" stroke="none" fill="#ffffff" stroke-width="1"/>
<text x="217.67" y="497.90" font-size="13.04" fill="#1f1f1f" stroke="#1f1f1f" stroke-width="0.18" textLength="37.50" lengthAdjust="spacingAndGlyphs">Sheet3</text>
<rect x="218.2" y="501.8" width="36.8" height="1.6" rx="0" fill="#1e7145"/>
<line x1="266.1" y1="486.5" x2="266.1" y2="502.5" stroke="#444" stroke-width="1"/>
<path d="M307.5 490 V499.5 M302.7 494.75 H312.3" stroke="#e0e0e0" fill="none" stroke-width="1.1"/>
<circle cx="439.3" cy="492" r="0.95" fill="#e0e0e0"/>
<circle cx="439.3" cy="495.5" r="0.95" fill="#e0e0e0"/>
<circle cx="439.3" cy="499" r="0.95" fill="#e0e0e0"/>
<path d="M456.3 495.4 L463 491.3 L463 499.5 Z" stroke="none" fill="#9a9a9a" stroke-width="1"/>
<rect x="467.5" y="492" width="199.2" height="6.8" rx="3.4" fill="#9c9c9c"/>
<path d="M706 494.6 L700 490.9 L700 498.3 Z" stroke="none" fill="#9a9a9a" stroke-width="1"/>
<rect x="0" y="509" width="720" height="17" rx="0" fill="#161616"/>
<line x1="0" y1="509.5" x2="720" y2="509.5" stroke="#353535" stroke-width="1"/>
<text x="8.81" y="522.50" font-size="10.14" fill="#cfcfcf" stroke="#cfcfcf" stroke-width="0.18" textLength="24.95" lengthAdjust="spacingAndGlyphs">Ready</text>
<path d="M54.8 523.9 H50.3 V514.2 H62.2 V517.2 M50.3 516.3 H62.2" stroke="#e0e0e0" fill="none" stroke-width="1.1"/>
<path d="M51.8 519.2 H54.2 M51.8 521.5 H54.2" stroke="#e0e0e0" fill="none" stroke-width="1"/>
<circle cx="58.3" cy="520.8" r="2.9" fill="#161616" stroke="#e0e0e0" stroke-width="1.1"/>
<circle cx="58.3" cy="520.8" r="1.2" fill="#e0e0e0"/>
<circle cx="82.6" cy="514.6" r="1.6" fill="none" stroke="#e0e0e0" stroke-width="1.1"/>
<path d="M77.6 515.4 C79 517.5 80.8 517.6 82.6 517.4 C84.4 517.6 86.2 517.5 87.6 515.4" stroke="#e0e0e0" fill="none" stroke-width="1.1" stroke-linecap="round"/>
<path d="M81.2 517.6 C81.2 520 80.5 521.8 79.2 524 M84 517.6 V519.8" stroke="#e0e0e0" fill="none" stroke-width="1.1" stroke-linecap="round"/>
<path d="M84.6 520.6 L88.6 524.2 M88.6 520.6 L84.6 524.2" stroke="#e0e0e0" fill="none" stroke-width="1.1"/>
<text x="92.27" y="522.50" font-size="10.14" font-weight="bold" fill="#f0f0f0" textLength="108.54" lengthAdjust="spacingAndGlyphs">Accessibility: Investigate</text>
<rect x="460.8" y="509.5" width="34.2" height="16.5" rx="0" fill="#2b2b2b"/>
<rect x="472.5" y="513.5" width="10.8" height="10" rx="0" fill="none" stroke="#e0e0e0" stroke-width="1"/>
<line x1="476.1" y1="513.5" x2="476.1" y2="523.5" stroke="#e0e0e0" stroke-width="1"/>
<line x1="479.7" y1="513.5" x2="479.7" y2="523.5" stroke="#e0e0e0" stroke-width="1"/>
<line x1="472.5" y1="516.8" x2="483.3" y2="516.8" stroke="#e0e0e0" stroke-width="1"/>
<line x1="472.5" y1="520.2" x2="483.3" y2="520.2" stroke="#e0e0e0" stroke-width="1"/>
<rect x="507.2" y="513.5" width="11" height="10" rx="0" fill="none" stroke="#e0e0e0" stroke-width="1"/>
<rect x="510" y="515.5" width="5.4" height="6" rx="0" fill="none" stroke="#e0e0e0" stroke-width="0.9"/>
<line x1="510" y1="518.5" x2="515.4" y2="518.5" stroke="#e0e0e0" stroke-width="0.8"/>
<path d="M541.3 523.5 V513.5 H553 V523.5 Z M544.5 513.5 V518.5 H548.5 V513.5" stroke="#e0e0e0" fill="none" stroke-width="1"/>
<line x1="569.4" y1="518.9" x2="575.6" y2="518.9" stroke="#bdbdbd" stroke-width="1"/>
<line x1="580.5" y1="518.9" x2="665.8" y2="518.9" stroke="#8a8a8a" stroke-width="1.6"/>
<rect x="620.5" y="514" width="5.1" height="9.6" rx="1" fill="#a0a0a0"/>
<path d="M670 518.9 H677 M673.5 515.4 V522.4" stroke="#bdbdbd" fill="none" stroke-width="1"/>
<text x="687.29" y="522.20" font-size="9.42" fill="#d6d6d6" stroke="#d6d6d6" stroke-width="0.18" textLength="24.12" lengthAdjust="spacingAndGlyphs">100%</text>
</svg></body></html>
